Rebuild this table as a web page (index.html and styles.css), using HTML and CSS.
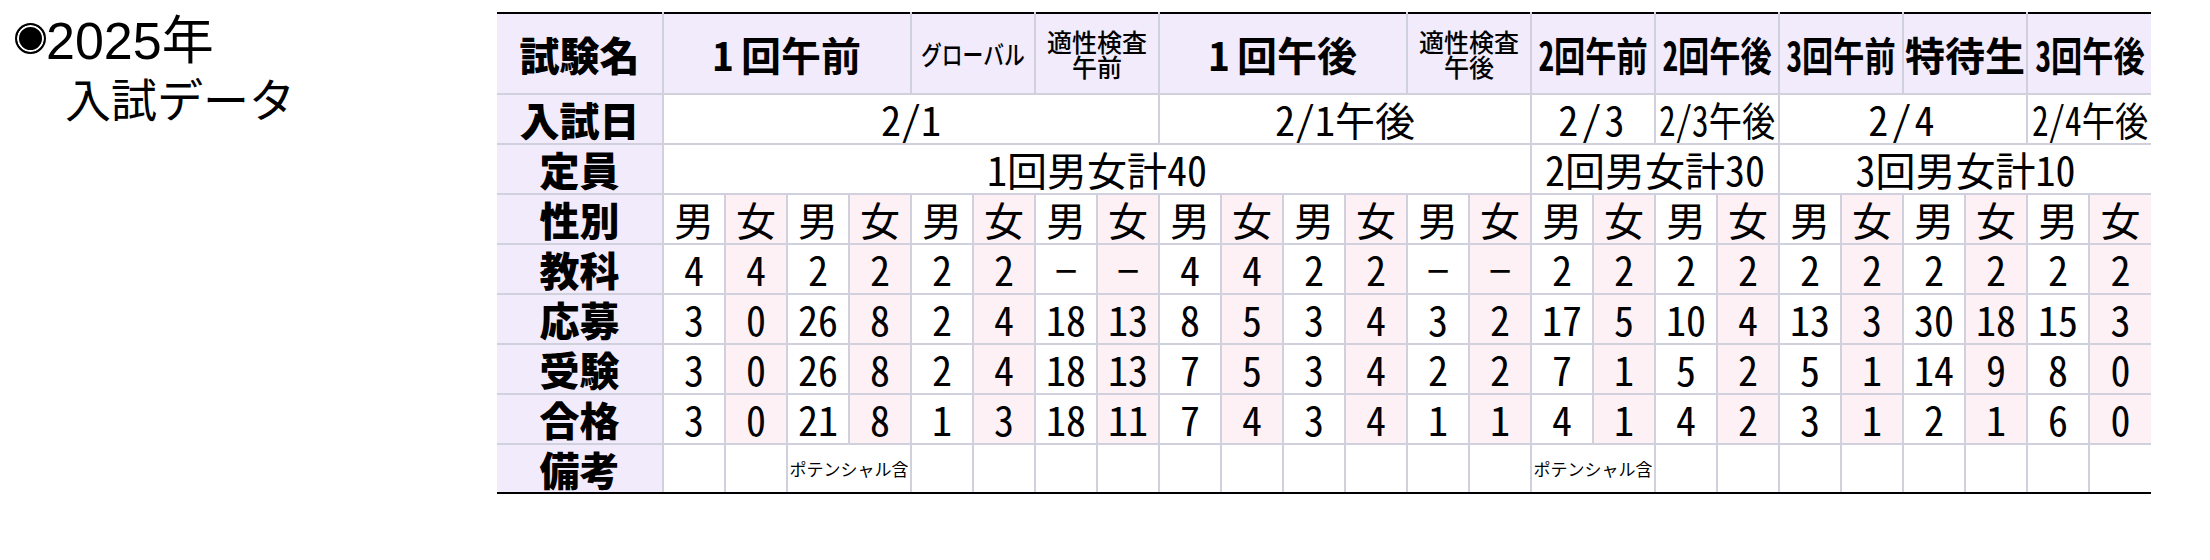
FILE: index.html
```html
<!DOCTYPE html>
<html lang="ja">
<head>
<meta charset="utf-8">
<title>2025年 入試データ</title>
<link rel="stylesheet" href="styles.css">
</head>
<body>
<div class="page">
  <div class="title">
    <div class="title-line1"><span class="bullet"></span>2025年</div>
    <div class="title-line2">入試データ</div>
  </div>
  <table class="exam">
    <colgroup>
      <col class="c-lab">
      <col><col><col><col><col><col><col><col><col><col><col><col>
      <col><col><col><col><col><col><col><col><col><col><col><col>
    </colgroup>
    <tr class="r-head">
      <th class="lab">試験名</th>
      <td class="hd" colspan="4">1 回午前</td>
      <td class="hd small kana" colspan="2"><span class="sq-g">グローバル</span></td>
      <td class="hd small2" colspan="2">適性検査<br>午前</td>
      <td class="hd" colspan="4">1 回午後</td>
      <td class="hd small2" colspan="2">適性検査<br>午後</td>
      <td class="hd" colspan="2"><span class="sq">2回午前</span></td>
      <td class="hd" colspan="2"><span class="sq">2回午後</span></td>
      <td class="hd" colspan="2"><span class="sq">3回午前</span></td>
      <td class="hd" colspan="2">特待生</td>
      <td class="hd" colspan="2"><span class="sq">3回午後</span></td>
    </tr>
    <tr>
      <th class="lab">入試日</th>
      <td colspan="8">2/1</td>
      <td colspan="6">2/1午後</td>
      <td colspan="2" class="wide">2/3</td>
      <td colspan="2"><span class="sq2">2/3午後</span></td>
      <td colspan="4" class="wide">2/4</td>
      <td colspan="2"><span class="sq2">2/4午後</span></td>
    </tr>
    <tr>
      <th class="lab">定員</th>
      <td colspan="14">1回男女計40</td>
      <td colspan="4">2回男女計30</td>
      <td colspan="6">3回男女計10</td>
    </tr>
    <tr>
      <th class="lab">性別</th>
      <td>男</td><td class="f">女</td><td>男</td><td class="f">女</td><td>男</td><td class="f">女</td>
      <td>男</td><td class="f">女</td><td>男</td><td class="f">女</td><td>男</td><td class="f">女</td>
      <td>男</td><td class="f">女</td><td>男</td><td class="f">女</td><td>男</td><td class="f">女</td>
      <td>男</td><td class="f">女</td><td>男</td><td class="f">女</td><td>男</td><td class="f">女</td>
    </tr>
    <tr>
      <th class="lab">教科</th>
      <td>4</td><td class="f">4</td><td>2</td><td class="f">2</td><td>2</td><td class="f">2</td>
      <td>−</td><td class="f">−</td><td>4</td><td class="f">4</td><td>2</td><td class="f">2</td>
      <td>−</td><td class="f">−</td><td>2</td><td class="f">2</td><td>2</td><td class="f">2</td>
      <td>2</td><td class="f">2</td><td>2</td><td class="f">2</td><td>2</td><td class="f">2</td>
    </tr>
    <tr>
      <th class="lab">応募</th>
      <td>3</td><td class="f">0</td><td>26</td><td class="f">8</td><td>2</td><td class="f">4</td>
      <td>18</td><td class="f">13</td><td>8</td><td class="f">5</td><td>3</td><td class="f">4</td>
      <td>3</td><td class="f">2</td><td>17</td><td class="f">5</td><td>10</td><td class="f">4</td>
      <td>13</td><td class="f">3</td><td>30</td><td class="f">18</td><td>15</td><td class="f">3</td>
    </tr>
    <tr>
      <th class="lab">受験</th>
      <td>3</td><td class="f">0</td><td>26</td><td class="f">8</td><td>2</td><td class="f">4</td>
      <td>18</td><td class="f">13</td><td>7</td><td class="f">5</td><td>3</td><td class="f">4</td>
      <td>2</td><td class="f">2</td><td>7</td><td class="f">1</td><td>5</td><td class="f">2</td>
      <td>5</td><td class="f">1</td><td>14</td><td class="f">9</td><td>8</td><td class="f">0</td>
    </tr>
    <tr>
      <th class="lab">合格</th>
      <td>3</td><td class="f">0</td><td>21</td><td class="f">8</td><td>1</td><td class="f">3</td>
      <td>18</td><td class="f">11</td><td>7</td><td class="f">4</td><td>3</td><td class="f">4</td>
      <td>1</td><td class="f">1</td><td>4</td><td class="f">1</td><td>4</td><td class="f">2</td>
      <td>3</td><td class="f">1</td><td>2</td><td class="f">1</td><td>6</td><td class="f">0</td>
    </tr>
    <tr class="r-last">
      <th class="lab">備考</th>
      <td></td><td></td><td colspan="2" class="note">ポテンシャル含</td>
      <td></td><td></td><td></td><td></td><td></td><td></td><td></td><td></td><td></td><td></td>
      <td colspan="2" class="note">ポテンシャル含</td>
      <td></td><td></td><td></td><td></td><td></td><td></td><td></td><td></td>
    </tr>
  </table>
</div>
</body>
</html>
```

FILE: styles.css
```css
html, body {
  margin: 0;
  padding: 0;
  background: #ffffff;
}

body {
  font-family: "Noto Sans CJK JP", "Noto Sans", sans-serif;
  color: #000000;
}

.page {
  display: flex;
  align-items: flex-start;
}

.title {
  flex: none;
  width: 497px;
  box-sizing: border-box;
  padding: 9px 0 0 15px;
  font-family: "Liberation Sans", "Noto Sans CJK JP", sans-serif;
  line-height: 65px;
}

.title-line1 {
  font-size: 52px;
  height: 56px;
  white-space: nowrap;
}

.bullet {
  display: inline-block;
  width: 27px;
  height: 27px;
  border: 2px solid #000;
  border-radius: 50%;
  background: #000;
  box-shadow: inset 0 0 0 2px #fff;
  margin-right: 0;
  vertical-align: 5px;
}

.title-line2 {
  font-size: 46px;
  padding-left: 50px;
  font-family: "Noto Sans CJK JP", sans-serif;
}

.exam {
  flex: none;
  margin-top: 12px;
  width: 1654px;
  table-layout: fixed;
  border-collapse: collapse;
  font-size: 40px;
  line-height: 1;
  font-feature-settings: "hwid";
}

.exam col { width: 62px; }
.exam col.c-lab { width: 166px; }

.exam th,
.exam td {
  padding: 0;
  border: 2px solid #d0d1dc;
  text-align: center;
  vertical-align: middle;
  white-space: nowrap;
  font-weight: 400;
  background: #ffffff;
  overflow: visible;
}

.exam tr { height: 50px; }
.exam tr.r-head { height: 81px; }
.exam tr.r-last { height: 49px; }

.exam tr > :first-child { border-left: hidden; }
.exam tr > :last-child { border-right: hidden; }
.exam tr.r-head > * { border-top: 2px solid #000; }
.exam tr.r-last > * { border-bottom: 2px solid #000; }

.exam .lab {
  background: #f1ebfc;
  font-weight: 900;
}

.exam .hd {
  background: #f1ebfc;
  font-weight: 700;
  word-spacing: -12px;
}

.exam .f { background: #fdf1f6; }

.exam .small {
  font-size: 26px;
  font-weight: 500;
}

.exam .small2 {
  font-size: 25px;
  line-height: 25px;
  font-weight: 500;
}

.exam .kana,
.exam .note {
  font-feature-settings: normal;
}

.exam .note {
  font-size: 17px;
  font-weight: 400;
}

.exam .wide {
  letter-spacing: 0.08em;
}

.sq,
.sq2,
.sq-g {
  display: inline-block;
  white-space: nowrap;
}

.sq {
  transform: scaleX(0.78);
  margin: 0 -20px;
}

.sq2 {
  transform: scaleX(0.83);
  margin: 0 -20px;
}

.sq-g {
  transform: scaleX(0.8);
  margin: 0 -15px;
}
```
